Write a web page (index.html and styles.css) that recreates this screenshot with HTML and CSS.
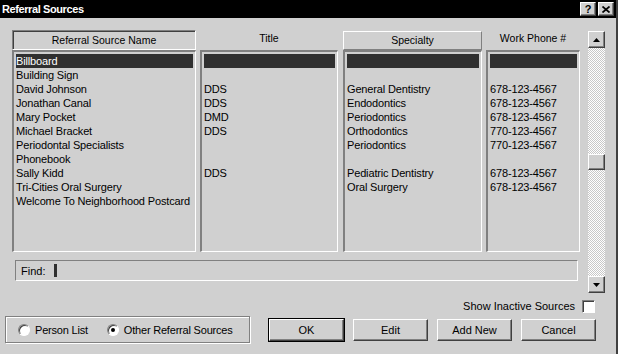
FILE: index.html
```html
<!DOCTYPE html>
<html>
<head>
    <title>Referral Sources</title>
    <link rel="stylesheet" href="styles.css">
</head>
<body>
    <div class="window">
        <div class="titlebar">
            <span class="title">Referral Sources</span>
            <div class="title-buttons">
                <button class="tb-button">?</button>
                <button class="tb-button">
                    <svg viewBox="0 0 8 7" width="8" height="7">
                        <path d="M0.5 0.5 L7.5 6.5 M7.5 0.5 L0.5 6.5"/>
                    </svg>
                </button>
            </div>
        </div>

        <div class="content">
            <div class="main">
                <div class="left-pane">
                    <div class="columns">
                        <div class="column col-name">
                            <div class="col-head head-sunken">Referral Source Name</div>
                            <div class="list">
                                <div class="row selected">Billboard</div>
                                <div class="row">Building Sign</div>
                                <div class="row">David Johnson</div>
                                <div class="row">Jonathan Canal</div>
                                <div class="row">Mary Pocket</div>
                                <div class="row">Michael Bracket</div>
                                <div class="row">Periodontal Specialists</div>
                                <div class="row">Phonebook</div>
                                <div class="row">Sally Kidd</div>
                                <div class="row">Tri-Cities Oral Surgery</div>
                                <div class="row">Welcome To Neighborhood Postcard</div>
                            </div>
                        </div>
                        <div class="column col-title">
                            <div class="col-head head-plain">Title</div>
                            <div class="list">
                                <div class="row selected"></div>
                                <div class="row"></div>
                                <div class="row">DDS</div>
                                <div class="row">DDS</div>
                                <div class="row">DMD</div>
                                <div class="row">DDS</div>
                                <div class="row"></div>
                                <div class="row"></div>
                                <div class="row">DDS</div>
                                <div class="row"></div>
                                <div class="row"></div>
                            </div>
                        </div>
                        <div class="column col-specialty">
                            <div class="col-head head-raised">Specialty</div>
                            <div class="list">
                                <div class="row selected"></div>
                                <div class="row"></div>
                                <div class="row">General Dentistry</div>
                                <div class="row">Endodontics</div>
                                <div class="row">Periodontics</div>
                                <div class="row">Orthodontics</div>
                                <div class="row">Periodontics</div>
                                <div class="row"></div>
                                <div class="row">Pediatric Dentistry</div>
                                <div class="row">Oral Surgery</div>
                                <div class="row"></div>
                            </div>
                        </div>
                        <div class="column col-phone">
                            <div class="col-head head-plain">Work Phone #</div>
                            <div class="list">
                                <div class="row selected"></div>
                                <div class="row"></div>
                                <div class="row">678-123-4567</div>
                                <div class="row">678-123-4567</div>
                                <div class="row">678-123-4567</div>
                                <div class="row">770-123-4567</div>
                                <div class="row">770-123-4567</div>
                                <div class="row"></div>
                                <div class="row">678-123-4567</div>
                                <div class="row">678-123-4567</div>
                                <div class="row"></div>
                            </div>
                        </div>
                    </div>
                    <div class="find-bar">
                        <span class="find-label">Find:</span>
                        <span class="caret"></span>
                    </div>
                </div>

                <div class="scrollbar">
                    <div class="scroll-button">
                        <svg viewBox="0 0 7 4" width="7" height="4"><polygon points="3.5,0 7,4 0,4"/></svg>
                    </div>
                    <div class="scroll-track">
                        <div class="scroll-thumb"></div>
                    </div>
                    <div class="scroll-button">
                        <svg viewBox="0 0 7 4" width="7" height="4"><polygon points="0,0 7,0 3.5,4"/></svg>
                    </div>
                </div>
            </div>

            <div class="inactive-row">
                <span class="inactive-label">Show Inactive Sources</span>
                <span class="checkbox"></span>
            </div>

            <div class="bottom-row">
                <div class="radio-group">
                    <label class="radio-item"><span class="radio"></span>Person List</label>
                    <label class="radio-item"><span class="radio checked"></span>Other Referral Sources</label>
                </div>
                <div class="button-row">
                    <button class="dlg-button default">OK</button>
                    <button class="dlg-button">Edit</button>
                    <button class="dlg-button">Add New</button>
                    <button class="dlg-button">Cancel</button>
                </div>
            </div>
        </div>
    </div>
</body>
</html>
```

FILE: styles.css
```css
body {
    margin: 0;
    padding: 0;
    background: #d0d0d0;
    font-family: 'Liberation Sans', Arial, sans-serif;
    font-size: 11px;
    color: #000;
}
.window {
    width: 616px;
    height: 354px;
    background: #d0d0d0;
    border-right: 2px solid #404040;
    overflow: hidden;
}

/* Title bar */
.titlebar {
    height: 18px;
    background: #000;
    display: flex;
    align-items: center;
    justify-content: space-between;
    margin-right: -2px;
}
.title {
    color: #fff;
    font-weight: bold;
    font-size: 11px;
    letter-spacing: -0.4px;
    padding-left: 2px;
}
.title-buttons {
    display: flex;
    gap: 2px;
    margin-right: 4px;
}
.tb-button {
    width: 16px;
    height: 14px;
    padding: 0;
    background: #d0d0d0;
    border: 1px solid;
    border-color: #fff #404040 #404040 #fff;
    box-shadow: inset -1px -1px 0 #808080;
    font-family: 'Liberation Sans', sans-serif;
    font-weight: bold;
    font-size: 11px;
    line-height: 11px;
    color: #000;
    display: flex;
    align-items: center;
    justify-content: center;
}
.tb-button svg {
    stroke: #000;
    stroke-width: 1.7;
    fill: none;
}

/* Main area */
.content {
    display: flex;
    flex-direction: column;
}
.main {
    display: flex;
    margin: 12px 11px 0 12px;
    gap: 8px;
}
.left-pane {
    width: 568px;
    display: flex;
    flex-direction: column;
}
.columns {
    display: flex;
}
.column {
    display: flex;
    flex-direction: column;
}
.col-name { width: 184px; margin-right: 4px; }
.col-title { width: 138px; margin-right: 5px; }
.col-specialty { width: 139px; margin-right: 4px; }
.col-phone { width: 94px; }

.col-head {
    height: 20px;
    box-sizing: border-box;
    text-align: center;
    font-size: 10.5px;
    line-height: 18px;
    white-space: nowrap;
}
.head-sunken {
    border: 1px solid;
    border-color: #808080 #fff #fff #808080;
    box-shadow: inset 1px 1px 0 #404040;
}
.head-raised {
    border: 1px solid;
    border-color: #fff #808080 #808080 #fff;
    height: 19px;
    margin-top: 1px;
    line-height: 17px;
}
.head-plain {
    line-height: 16px;
}

.list {
    height: 202px;
    box-sizing: border-box;
    border-style: solid;
    border-width: 2px 1px 1px 2px;
    border-color: #808080 #fff #fff #808080;
    padding: 2px 2px 0 2px;
}
.row {
    height: 14px;
    line-height: 14px;
    letter-spacing: -0.15px;
    white-space: nowrap;
}
.row.selected {
    background: #303030;
    color: #fff;
}

.find-bar {
    display: flex;
    align-items: center;
    height: 21px;
    box-sizing: border-box;
    margin: 8px 2px 0 3px;
    border: 1px solid;
    border-color: #808080 #fff #fff #808080;
    padding-left: 5px;
}
.find-label {
    margin-right: 9px;
}
.caret {
    width: 3px;
    height: 13px;
    background: #303030;
}

/* Scrollbar */
.scrollbar {
    width: 17px;
    margin-top: 1px;
    height: 262px;
    display: flex;
    flex-direction: column;
}
.scroll-button {
    height: 17px;
    box-sizing: border-box;
    border: 1px solid;
    border-color: #fff #404040 #404040 #fff;
    box-shadow: inset -1px -1px 0 #808080;
    background: #d0d0d0;
    display: flex;
    align-items: center;
    justify-content: center;
}
.scroll-button svg {
    fill: #000;
}
.scroll-track {
    flex: 1;
    background: repeating-conic-gradient(#fff 0 25%, #c8c8c8 0 50%) 0 0 / 2px 2px;
}
.scroll-thumb {
    height: 16px;
    margin-top: 106px;
    box-sizing: border-box;
    border: 1px solid;
    border-color: #fff #404040 #404040 #fff;
    box-shadow: inset -1px -1px 0 #808080;
    background: #d0d0d0;
}

/* Bottom controls */
.inactive-row {
    display: flex;
    justify-content: flex-end;
    align-items: center;
    height: 14px;
    margin: 6px 21px 0 0;
    gap: 7px;
}
.checkbox {
    width: 13px;
    height: 13px;
    box-sizing: border-box;
    background: #fff;
    border: 1px solid;
    border-color: #808080 #fff #fff #808080;
    box-shadow: inset 1px 1px 0 #404040;
}
.bottom-row {
    display: flex;
    align-items: center;
    margin: 3px 0 0 5px;
    gap: 19px;
}
.radio-group {
    width: 245px;
    height: 27px;
    box-sizing: border-box;
    border: 1px solid #808080;
    box-shadow: inset 1px 1px 0 #fff, 1px 1px 0 #fff;
    display: flex;
    align-items: center;
    padding-left: 12px;
    gap: 19px;
    letter-spacing: -0.2px;
}
.radio-item {
    display: flex;
    align-items: center;
    gap: 5px;
    white-space: nowrap;
}
.radio {
    width: 12px;
    height: 12px;
    box-sizing: border-box;
    border-radius: 50%;
    background: #fff;
    border: 1px solid;
    border-color: #808080 #fff #fff #808080;
    box-shadow: inset 1px 1px 0 #404040;
    display: flex;
    align-items: center;
    justify-content: center;
}
.radio.checked::after {
    content: "";
    width: 4px;
    height: 4px;
    border-radius: 50%;
    background: #000;
}
.button-row {
    display: flex;
    gap: 9px;
}
.dlg-button {
    width: 75px;
    height: 22px;
    padding: 0;
    background: #d0d0d0;
    border: 1px solid;
    border-color: #fff #404040 #404040 #fff;
    box-shadow: inset -1px -1px 0 #808080;
    font-family: inherit;
    font-size: 11px;
    color: #000;
}
.dlg-button.default {
    outline: 1px solid #000;
    outline-offset: 0;
}
```
